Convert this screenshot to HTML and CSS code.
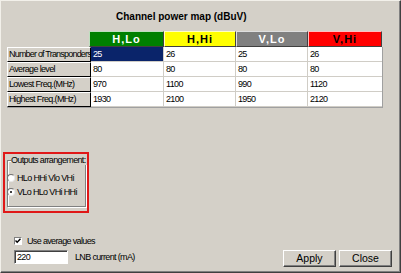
FILE: index.html
```html
<!DOCTYPE html>
<html>
<head>
<meta charset="utf-8">
<link rel="stylesheet" href="styles.css">
</head>
<body>
<div class="window">
  <div class="title">Channel power map (dBuV)</div>
  <div class="table">
    <div class="hrow">
      <div class="hcell w1 green">H,Lo</div>
      <div class="hcell w2 yellow">H,Hi</div>
      <div class="hcell w3 gray">V,Lo</div>
      <div class="hcell w4 red">V,Hi</div>
    </div>
    <div class="rows">
      <div class="row">
        <div class="label long">Number of Transponders</div>
        <div class="cell c1 sel">25</div>
        <div class="cell c2">26</div>
        <div class="cell c3">25</div>
        <div class="cell c4">26</div>
      </div>
      <div class="row">
        <div class="label">Average level</div>
        <div class="cell c1">80</div>
        <div class="cell c2">80</div>
        <div class="cell c3">80</div>
        <div class="cell c4">80</div>
      </div>
      <div class="row">
        <div class="label">Lowest Freq.(MHz)</div>
        <div class="cell c1">970</div>
        <div class="cell c2">1100</div>
        <div class="cell c3">990</div>
        <div class="cell c4">1120</div>
      </div>
      <div class="row">
        <div class="label">Highest Freq.(MHz)</div>
        <div class="cell c1">1930</div>
        <div class="cell c2">2100</div>
        <div class="cell c3">1950</div>
        <div class="cell c4">2120</div>
      </div>
    </div>
  </div>
  <div class="mark">
    <fieldset class="group">
      <legend>Outputs arrangement:</legend>
      <div class="radio first"><span class="rb"></span><span>HLo HHi Vlo VHi</span></div>
      <div class="radio"><span class="rb on"></span><span>VLo HLo VHi HHi</span></div>
    </fieldset>
  </div>
  <div class="check">
    <span class="cb"><svg width="6" height="6" viewBox="0 0 6 6"><path d="M0.5 2.5 L2.2 4.3 L5.5 0.8" fill="none" stroke="#000" stroke-width="1.4"/></svg></span>
    <span>Use average values</span>
  </div>
  <div class="bottom">
    <div class="input">220</div>
    <div class="lnb">LNB current (mA)</div>
    <div class="buttons">
      <div class="btn">Apply</div>
      <div class="btn">Close</div>
    </div>
  </div>
</div>
</body>
</html>
```
FILE: styles.css
```css
* { box-sizing: border-box; }
html, body { margin: 0; padding: 0; background: #d4d0c8; }
body {
  font-family: "Liberation Sans", Arial, sans-serif;
  font-size: 9px;
  letter-spacing: -0.65px;
  color: #000;
}
.window {
  width: 401px;
  height: 273px;
  border-top: 1px solid #f2f0ea;
  border-left: 1px solid #f2f0ea;
  border-right: 1px solid #404040;
  border-bottom: 1px solid #404040;
  box-shadow: inset -1px -1px 0 #808080;
  display: flex;
  flex-direction: column;
  overflow: hidden;
  white-space: nowrap;
}
.title {
  margin-top: 10px;
  padding-left: 115px;
  font-weight: bold;
  font-size: 10px;
  letter-spacing: 0;
  line-height: 12px;
}
.table {
  margin-top: 8px;
  margin-left: 6px;
  width: 376px;
}
.hrow {
  display: flex;
  margin-left: 82px;
  height: 16px;
}
.hcell {
  height: 16px;
  border-top: 1px solid rgba(255,255,255,0.75);
  border-left: 1px solid rgba(255,255,255,0.75);
  border-right: 1px solid #404040;
  border-bottom: 1px solid #404040;
  text-align: center;
  font-weight: bold;
  font-size: 11px;
  line-height: 14px;
  letter-spacing: 1px;
}
.w1 { width: 75px; }
.w2 { width: 72px; }
.w3 { width: 72px; }
.w4 { width: 74px; }
.green { background: #008000; color: #fff; }
.yellow { background: #ffff00; color: #000; }
.gray { background: #808080; color: #fff; }
.red { background: #ff0000; color: #000; }
.rows {
  border-right: 1px solid #a0a0a0;
  border-bottom: 1px solid #a0a0a0;
  width: 376px;
}
.row {
  display: flex;
  height: 15px;
}
.label {
  width: 84px;
  height: 15px;
  background: #d4d0c8;
  border-top: 1px solid #fff;
  border-left: 1px solid #fff;
  border-right: 1px solid #000;
  border-bottom: 1px solid #000;
  padding-left: 1px;
  line-height: 13px;
  overflow: hidden;
}
.label.long { letter-spacing: -0.8px; }
.cell {
  height: 15px;
  background: #fff;
  border-right: 1px solid #d0cdc6;
  border-bottom: 1px solid #d0cdc6;
  padding-left: 2px;
  line-height: 14px;
}
.c1 { width: 73px; }
.c2 { width: 72px; }
.c3 { width: 72px; }
.c4 { width: 74px; border-right: none; }
.cell.sel { background: #0a246a; color: #fff; }
.mark {
  margin-top: 44px;
  margin-left: 2px;
  width: 86px;
  height: 61px;
  border: 2px solid #e01818;
}
.group {
  margin: 1px 0 0 2px;
  padding: 0;
  min-width: 0;
  width: 79px;
  height: 52px;
  border: 1px solid #808080;
  box-shadow: inset 1px 1px 0 #fff, 1px 1px 0 #fff;
}
.group legend {
  margin-left: 3px;
  padding: 0 1px 0 0;
  line-height: 10px;
  background: #d4d0c8;
}
.radio {
  display: flex;
  align-items: center;
  height: 10px;
  margin-top: 4px;
  margin-left: -1px;
}
.radio.first { margin-top: 8px; }
.rb {
  width: 8px;
  height: 8px;
  border-radius: 50%;
  background: #fff;
  border: 1px solid;
  border-color: #707070 #e8e8e8 #e8e8e8 #707070;
  margin-right: 2px;
  position: relative;
  flex: none;
}
.rb.on::after {
  content: "";
  position: absolute;
  left: 2px;
  top: 2px;
  width: 2px;
  height: 2px;
  border-radius: 50%;
  background: #000;
}
.check {
  display: flex;
  align-items: center;
  height: 10px;
  margin-top: 23px;
  margin-left: 13px;
}
.cb {
  width: 8px;
  height: 8px;
  background: #fff;
  border-top: 1px solid #808080;
  border-left: 1px solid #808080;
  border-right: 1px solid #fff;
  border-bottom: 1px solid #fff;
  margin-right: 5px;
  display: flex;
  align-items: center;
  justify-content: center;
}
.cb svg { display: block; }
.bottom {
  display: flex;
  align-items: flex-start;
  margin-top: 4px;
  margin-left: 13px;
  margin-right: 8px;
}
.input {
  width: 54px;
  height: 14px;
  background: #fff;
  border-top: 1px solid #808080;
  border-left: 1px solid #808080;
  border-right: 1px solid #fff;
  border-bottom: 1px solid #fff;
  box-shadow: inset 1px 1px 0 #404040;
  padding-left: 2px;
  line-height: 12px;
}
.lnb {
  margin-left: 7px;
  line-height: 14px;
}
.buttons {
  margin-left: auto;
  display: flex;
  gap: 3px;
}
.btn {
  width: 53px;
  height: 17px;
  border-top: 1px solid #fff;
  border-left: 1px solid #fff;
  border-right: 1px solid #404040;
  border-bottom: 1px solid #404040;
  box-shadow: inset -1px -1px 0 #808080;
  text-align: center;
  font-size: 10.5px;
  letter-spacing: 0;
  line-height: 15px;
}
```
